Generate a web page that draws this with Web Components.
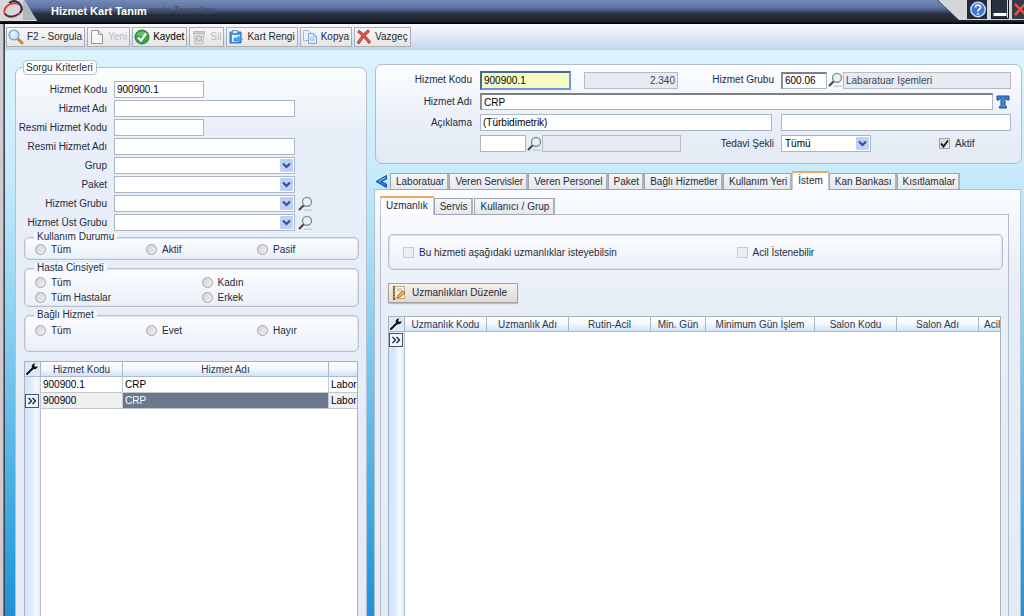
<!DOCTYPE html>
<html lang="tr">
<head>
<meta charset="utf-8">
<title>Hizmet Kart Tanım</title>
<style>
html, body { margin: 0; height: 100%; }
body { font: 10px/12px "Liberation Sans", Arial, sans-serif; color: #1f2a3c; overflow: hidden; }
</style>
</head>
<body>
<app-window></app-window>
<script>
const base = `*{box-sizing:border-box} input,select,button{font:inherit;color:inherit;margin:0;border-radius:0} svg{display:block}`;
const define = (name, render) => customElements.define(name, class extends HTMLElement {
  connectedCallback() {
    if (this.shadowRoot) return;
    const root = this.attachShadow({ mode: 'open' });
    const t = document.createElement('template');
    t.innerHTML = render(this, (n, d = '') => this.getAttribute(n) ?? d);
    root.append(t.content.cloneNode(true));
  }
});

const icons = {
  search: `<svg width="16" height="16" viewBox="0 0 16 16"><path d="M9.500 9.500l4.500 4.500" stroke="#c58a4c" stroke-width="3" stroke-linecap="round"/><circle cx="6" cy="6" r="4.800" fill="#cfeafb" stroke="#7ba9cf" stroke-width="1.600"/><path d="M3.500 5.500a3 3 0 0 1 3-2.300" stroke="#fff" stroke-width="1.400" fill="none"/></svg>`,
  page: `<svg width="16" height="16" viewBox="0 0 16 16"><path d="M2.500 1.500h7l4 4v9h-11z" fill="#fcfcfc" stroke="#777"/><path d="M9.500 1.500v4h4" fill="#ddd" stroke="#777"/></svg>`,
  ok: `<svg width="16" height="16" viewBox="0 0 16 16"><circle cx="8" cy="8" r="7" fill="#3ba246" stroke="#237b30"/><path d="M2.500 6a6 6 0 0 1 11 0q-5 2-11 0z" fill="#7bcd7e" opacity=".7"/><path d="M4 8.500l3 3 5-7" fill="none" stroke="#fff" stroke-width="2.200"/></svg>`,
  trash: `<svg width="16" height="16" viewBox="0 0 16 16"><path d="M3 4h10l-1 11H4z" fill="#ddd" stroke="#aaa"/><path d="M2.500 2.500h11v2h-11z" fill="#c4c4c4" stroke="#aaa"/><circle cx="8" cy="9.500" r="2.500" fill="none" stroke="#aaa" stroke-width="1.500"/></svg>`,
  color: `<svg width="16" height="16" viewBox="0 0 16 16"><path d="M2 3h11v11H2z" fill="#4796dc" stroke="#2f73b8"/><path d="M4.500 1.500h5v3h-5z" fill="#d9ecfb" stroke="#5b97ca"/><path d="M4 6h8v7H4z" fill="#e0f0ff"/><path d="M6 9h4V7l4.500 3.500L10 14v-2H6z" fill="#49a4ee" stroke="#2f7fd0" stroke-width=".6"/></svg>`,
  copy: `<svg width="16" height="16" viewBox="0 0 16 16"><path d="M1.500 1.500h5l3 3v7h-8z" fill="#e9f2fd" stroke="#9eb8df"/><path d="M6.500 4.500h5l3 3v7h-8z" fill="#dceafb" stroke="#86a5d6"/><path d="M11.500 4.500v3h3M8 9h4M8 11h5" fill="none" stroke="#9eb8df"/></svg>`,
  cross: `<svg width="16" height="16" viewBox="0 0 16 16"><path d="M2 2q6 4 12 12M13 1.500Q7 6 2 14.500" fill="none" stroke="#a93127" stroke-width="3"/><path d="M2 2q6 4 12 12M13 1.500Q7 6 2 14.500" fill="none" stroke="#e2574b" stroke-width="1.600"/></svg>`,
  edit: `<svg width="16" height="16" viewBox="0 0 16 16"><path d="M3.500 1.500h10v12h-10z" fill="#fbf7ea" stroke="#b8a98a"/><path d="M2 1h2v14H2z" fill="#8a5228"/><path d="M1 3h4M1 6h4M1 9h4M1 12h4" stroke="#d9b98e"/><path d="M6 4h5M6 6h6" stroke="#aaa"/><path d="M6 13l1-3 5-4 2 2-5 4z" fill="#f4b13f" stroke="#bb7620"/></svg>`,
  lens: `<svg width="16" height="16" viewBox="0 0 16 16"><path d="M7 14.200h8" stroke="#bccac8" stroke-width="1.200"/><path d="M7 9L2 14" stroke="#484848" stroke-width="2.200"/><circle cx="10" cy="5.800" r="4.500" fill="#e5f4f3" stroke="#7b8c8a" stroke-width="1.300"/></svg>`,
  wrench: `<svg width="14" height="14" viewBox="0 0 14 14"><path d="M2 12l5.500-5.500" stroke="#111" stroke-width="2" stroke-linecap="round"/><path d="M10.300 1.500a3 3 0 0 0-3.500 3.800L8.700 7.200A3 3 0 0 0 12.500 4l-1.900 1L9 3.600z" fill="#111"/></svg>`,
  chevron: `<svg width="13" height="13" viewBox="0 0 13 13"><rect width="13" height="13" rx="1" fill="#bfd0f8"/><path d="M3 4.500l3.500 3.500L10 4.500" fill="none" stroke="#35518f" stroke-width="2.200"/></svg>`
};

define('title-bar', () => `<style>${base}
:host{display:flex;align-items:center;height:24px;flex:none;position:relative;background:linear-gradient(#7489b8,#5f75a4 30%,#445273 45%,#262e3d 60%,#1d2430 90%,#000 96%);color:#fff}
.logo{align-self:flex-start}
h1{font-size:11px;line-height:14px;margin:0 0 3px 14px;font-weight:bold}
.ghost{color:#414d68;margin:0 0 3px 2px}
.win{margin-left:auto;align-self:flex-start;display:flex}
</style>
<svg class="logo" width="37" height="21" viewBox="0 0 37 21"><path d="M0 0h24q4 6 13 21H0z" fill="#d8d8dc"/><path d="M23 0q5 8 14 20H23z" fill="#b3b5bc"/><g fill="none"><ellipse cx="13" cy="10" rx="9" ry="6.500" stroke="#d74434" stroke-width="2" transform="rotate(-20 13 10)"/><path d="M9 3q5-4 10 0 5 5 1 10" stroke="#29334a" stroke-width="2"/><path d="M5 14q6 5 13 0" stroke="#29334a" stroke-width="1.500"/></g></svg>
<h1>Hizmet Kart Tanım</h1><span class="ghost">mete Tanımları</span>
<svg class="win" role="img" aria-label="Pencere düğmeleri" width="87" height="20" viewBox="0 0 87 20"><path d="M0 0h87v20H22q-5-2-9-9z" fill="#565d70"/><path d="M2 0h85v20H23z" fill="#d5d6da"/><path d="M2 0l21 20" stroke="#f2f2f2"/><path d="M30 0h20v19H30z" fill="#222c40"/><circle cx="41" cy="9.500" r="7.200" fill="#3f78d0" stroke="#c9def8" stroke-width="1.400"/><path d="M38.500 7.500q0-2.500 2.500-2.500t2.500 2.300q0 1.200-1.300 1.900T41 11.500M41 13v1.800" fill="none" stroke="#fff" stroke-width="1.600"/><path d="M54 0h16v19H54z" fill="#29303f"/><path d="M54.500 0v18.500h17V0" fill="none" stroke="#10141c"/><path d="M56.500 13h13v3h-13z" fill="#fff"/><path d="M75 0h12v19H75z" fill="#353a46"/><path d="M78 4l11 11M89 3L78 15" stroke="#e4503e" stroke-width="2.600"/></svg>`);

define('tool-button', (el, a) => `<style>${base}
:host{display:block;flex:none}
button{display:flex;align-items:center;gap:3px;height:20px;padding:0 2px 0 1px;border:1px solid #a9adb5;background:linear-gradient(#f8f8f6,#e6e5e3);white-space:nowrap;color:${a('tone', '#222b3a')}}
button:disabled{color:#bbbbbf} button:disabled svg{opacity:.75}
:host([wide]) button{gap:5px;padding:0 10px 0 2px;border-color:#a7a39f;background:linear-gradient(#f4f0ec,#ddd9d6);box-shadow:0 1px 1px #b9b9bf}
</style><button type="button" ${el.hasAttribute('disabled') ? 'disabled' : ''}>${icons[a('icon')]}<span><slot></slot></span></button>`);

define('text-field', (el, a) => `<style>${base}
:host{display:flex;align-items:center;gap:var(--label-gap,8px);min-width:0;${a('w') ? 'flex:none' : 'flex:1'}}
label{flex:none;width:${a('lw', 'var(--label-w,auto)')};text-align:right;white-space:nowrap}
input{${a('w') ? `flex:none;width:${a('w')}px` : 'flex:1;width:0;min-width:0'};height:17px;border:1px solid #abb5c8;background:#fff;padding:0 2px;color:#000;outline:0}
input[readonly]{background:#e7ebf1;color:#3c4555;border-color:#b4bac6}
:host([num]) input{text-align:right}
:host([sunk]) input{border-top:2px solid #7f7f82;border-left:2px solid #8e8e91}
:host([focus]) input{height:19px;background:#f6fdc4;border:2px solid #6f97e4;border-top-color:#47688f;border-left-color:#47688f;}
</style>${a('label') ? `<label for="f">${a('label')}</label>` : ''}<input id="f" type="text" value="${a('value')}" ${a('label') ? '' : `aria-label="${a('name')}"`} ${el.hasAttribute('readonly') ? 'readonly' : ''}>`);

define('combo-box', (el, a) => `<style>${base}
:host{display:flex;align-items:center;gap:var(--label-gap,8px);flex:none}
label{flex:none;width:var(--label-w,auto);text-align:right;white-space:nowrap}
span{position:relative;display:block;width:${a('w')}px}
select{appearance:none;width:100%;height:17px;border:1px solid #abb5c8;background:#fff;padding:0 3px;color:#000;display:block;outline:0}
svg{position:absolute;right:2px;top:2px;pointer-events:none}
</style><label for="s">${a('label')}</label><span><select id="s"><option>${a('value')}</option></select>${icons.chevron}</span>`);

define('lookup-button', (el, a) => `<style>${base}
:host{display:block;flex:none}button{display:block;border:0;background:none;padding:0}
</style><button type="button" aria-label="${a('name', 'Ara')}">${icons.lens}</button>`);

define('choice-item', (el, a) => `<style>${base}
:host{display:block}
label{display:flex;align-items:center;gap:5px;white-space:nowrap}
input{appearance:none;flex:none;width:11px;height:11px;border:1px solid #a3a5aa;background:linear-gradient(135deg,#d4d4d6,#f0f0f0)}
input[type=radio]{border-radius:50%}
input:disabled{border-color:#c9cbd0;background:#eceef0}
.box{display:flex;position:relative}
svg{position:absolute;left:1px;top:1px}
</style><label><span class="box"><input type="${a('type', 'radio')}" ${el.hasAttribute('checked') ? 'checked' : ''} ${el.hasAttribute('disabled') ? 'disabled' : ''}>${el.hasAttribute('checked') ? '<svg width="9" height="9" viewBox="0 0 9 9"><path d="M1 4.500l2.500 3L8 1.500" fill="none" stroke="#222" stroke-width="2"/></svg>' : ''}</span><slot></slot></label>`);

define('group-box', (el, a) => `<style>${base}
:host{display:block;flex:none}
fieldset{margin:0;min-width:0;border:1px solid #b9c0d0;border-radius:5px;background:linear-gradient(#fcfdff,#eaf0f8);padding:var(--pad,0);box-shadow:inset 0 0 0 1px #dde3ee}
legend{padding:0 3px;margin-left:9px;line-height:10px;background:#f5f8fc}
div{display:grid;grid-template-columns:repeat(${a('cols', '3')},1fr);row-gap:4px;line-height:11px}
::slotted(*){padding-left:var(--inset,10px)}
</style><fieldset>${a('label') ? `<legend>${a('label')}</legend>` : ''}<div><slot></slot></div></fieldset>`);

define('data-grid', (el, a) => {
  const cols = JSON.parse(a('columns')), rows = JSON.parse(a('rows'));
  const cell = (v, c, r) => `<td class="${r.sel && c === 1 ? 'hot' : r.sel ? 'sel' : ''}">${v}</td>`;
  return `<style>${base}
:host{display:block;flex:1;min-height:0;overflow:hidden;border:1px solid #a9b1c0;border-bottom:0;background:linear-gradient(90deg,#d3e3fb,#d8e7fc 5px,#f4faff 11px,#dfeefb 15px,#b5bdc9 15px,#b5bdc9 16px,#fff 16px)}
table{border-collapse:separate;border-spacing:0;table-layout:fixed;width:${cols.reduce((s, c) => s + c[1], 16)}px}
th{height:15px;padding:0;font-weight:normal;line-height:13px;white-space:nowrap;border-right:1px solid #aeb6c3;border-bottom:1px solid #aeb9cb;background:linear-gradient(#fff,#f2f7fd 50%,#cfe2f8);color:#2b3648}
th:first-child{background:#dce9f9}
td{height:16px;padding:0 2px;line-height:13px;color:#000;border-right:1px solid #c3c8d0;border-bottom:1px solid #c3c8d0;white-space:nowrap}
td:first-child{padding:0;border-bottom:0}
.sel{background:#f0f0f0}.hot{background:#6c788c;color:#fff}
.none{border:0}
.mark{display:block;width:14px;height:14px;border:1px solid #46556d;background:#edf4fd}
</style><table><colgroup><col style="width:16px">${cols.map(c => `<col style="width:${c[1]}px">`).join('')}</colgroup>
<thead><tr><th aria-label="Ayarlar">${icons.wrench}</th>${cols.map(c => `<th scope="col" style="text-align:${c[2] || 'center'};padding-left:${c[2] ? 5 : 0}px">${c[0]}</th>`).join('')}</tr></thead>
<tbody>${rows.map(r => `<tr><td>${r.mark ? '<svg class="mark" viewBox="0 0 12 12"><path d="M2.500 3l3 3-3 3M6.500 3l3 3-3 3" fill="none" stroke="#16233a" stroke-width="1.300"/></svg>' : ''}</td>${r.cells ? r.cells.map((v, c) => cell(v, c, r)).join('') : `<td class="none" colspan="${cols.length}"></td>`}</tr>`).join('')}</tbody></table>`;
});

define('tab-strip', (el, a) => `<style>${base}
:host{display:flex;align-items:flex-end;height:19px;flex:none;position:relative;z-index:1;margin-bottom:-1px}
.tabs{display:flex;align-items:flex-end}
.tab{height:17px;padding:0 4px 0 5px;margin-right:1px;flex:none;border:1px solid #9ca5b1;border-right:2px solid #aeb4bd;background:linear-gradient(#f6f6f5,#e6e8eb);white-space:nowrap;line-height:13px}
:host([back]) .tab{margin-right:0;padding-right:3px}
.tab[aria-selected=true]{height:19px;padding-bottom:3px;border-color:#c3c9d4;border-top:2px solid #efa85a;border-bottom:0;border-right-width:1px;background:#fafcff;margin-right:0}
:host .tab[aria-selected=true]{padding-right:5px}
.back{padding:0;border:0;background:none;margin:0 3px 2px 1px}
</style>${el.hasAttribute('back') ? '<button class="back" type="button" aria-label="Geri"><svg width="12" height="13" viewBox="0 0 12 13"><path d="M11.500 0.500L1 6.500l10.500 6V9L6.500 6.500l5-2.500z" fill="#2f74d8" stroke="#1c4fa4"/><path d="M4 6.200L10.500 2.500" stroke="#8cc4ff"/></svg></button>' : ''}
<div class="tabs" role="tablist">${a('tabs').split('|').map(t => `<button class="tab" type="button" role="tab" aria-selected="${t === a('active')}">${t}</button>`).join('')}</div>`);

define('query-panel', () => `<style>${base}
:host{display:flex;min-height:0;--label-w:91px;--label-gap:7px}
fieldset{flex:1;margin:0;min-width:0;border:1px solid #b4bfd2;border-bottom:0;border-radius:7px 7px 0 0;padding:0;background:linear-gradient(#fdfeff,#e9eff8 60px,#e4ebf5);display:flex;flex-direction:column}
legend{margin-left:7px;padding:0 3px 0 2px;line-height:13px;background:#fff;border:1px solid #b9c2d2;border-radius:4px}
.fields{display:flex;flex-direction:column;gap:2px;padding-top:6px}
.row{display:flex;align-items:center;gap:2px;height:17px}
.groups{display:flex;flex-direction:column;gap:3px;margin:1px 7px 0 8px}
.one{--pad:2px 0 4px}.two{--pad:4px 0 3px}.three{--pad:5px 0 15px}
data-grid{margin:9px 8px 0}
</style><fieldset><legend>Sorgu Kriterleri</legend>
<div class="fields">
<div class="row"><text-field label="Hizmet Kodu" value="900900.1" w="90"></text-field></div>
<div class="row"><text-field label="Hizmet Adı" w="181"></text-field></div>
<div class="row"><text-field label="Resmi Hizmet Kodu" w="90"></text-field></div>
<div class="row"><text-field label="Resmi Hizmet Adı" w="181"></text-field></div>
<div class="row"><combo-box label="Grup" w="181"></combo-box></div>
<div class="row"><combo-box label="Paket" w="181"></combo-box></div>
<div class="row"><combo-box label="Hizmet Grubu" w="181"></combo-box><lookup-button></lookup-button></div>
<div class="row"><combo-box label="Hizmet Üst Grubu" w="181"></combo-box><lookup-button></lookup-button></div>
</div>
<div class="groups">
<group-box class="one" label="Kullanım Durumu"><choice-item>Tüm</choice-item><choice-item>Aktif</choice-item><choice-item>Pasif</choice-item></group-box>
<group-box class="two" label="Hasta Cinsiyeti" cols="2"><choice-item>Tüm</choice-item><choice-item>Kadın</choice-item><choice-item>Tüm Hastalar</choice-item><choice-item>Erkek</choice-item></group-box>
<group-box class="three" label="Bağlı Hizmet"><choice-item>Tüm</choice-item><choice-item>Evet</choice-item><choice-item>Hayır</choice-item></group-box>
</div>
<data-grid columns='[["Hizmet Kodu",82],["Hizmet Adı",206],["",60]]' rows='[{"cells":["900900.1","CRP","Labor"]},{"mark":1,"sel":1,"cells":["900900","CRP","Labor"]}]'></data-grid>
</fieldset>`);

define('service-card', () => `<style>${base}
:host{display:flex;flex-direction:column;gap:4px;flex:none;border:1px solid #b0bccf;border-radius:7px;background:linear-gradient(#fcfdff,#e9eff8 60%,#e3eaf4);padding:6px 10px 11px 0}
.row{display:flex;align-items:center;height:17px}
.first{height:18px}
.push{margin-left:auto;--label-gap:7px}
.code{margin-left:13px}.half{margin-left:9px}
.t{margin:0 1px 0 3px;padding:0;border:0;background:none}
.active{width:140px;padding-left:68px;flex:none}
</style>
<div class="row first"><text-field focus label="Hizmet Kodu" lw="96px" value="900900.1" w="91"></text-field><text-field class="code" readonly num name="Numara" value="2.340" w="94"></text-field>
<text-field class="push" sunk label="Hizmet Grubu" value="600.06" w="46"></text-field><lookup-button></lookup-button><text-field readonly name="Grup adı" value="Labaratuar İşemleri" w="168"></text-field></div>
<div class="row"><text-field sunk label="Hizmet Adı" lw="96px" value="CRP"></text-field><button class="t" type="button" aria-label="Metin"><svg width="14" height="14" viewBox="0 0 14 14"><path d="M1 1h12v4h-2q0-2-2-2v7.500q0 1 1.500 1V13h-7v-1.500q1.500 0 1.500-1V3Q3 3 3 5H1z" fill="#4a86d6" stroke="#20468f"/></svg></button></div>
<div class="row"><text-field label="Açıklama" lw="96px" value="(Türbidimetrik)"></text-field><text-field class="half" name="Açıklama 2" w="230"></text-field></div>
<div class="row"><text-field name="Kod" style="margin-left:104px" w="46"></text-field><lookup-button></lookup-button><text-field readonly name="Ad" w="139"></text-field>
<combo-box class="push" label="Tedavi Şekli" value="Tümü" w="90"></combo-box><div class="active"><choice-item type="checkbox" checked>Aktif</choice-item></div></div>`);

define('detail-tabs', () => `<style>${base}
:host{display:flex;flex-direction:column;flex:1;min-height:0}
.outer{flex:1;min-height:0;display:flex;flex-direction:column;border:1px solid #b3bed1;border-bottom:0;background:linear-gradient(#fafcff,#e8eef7 90px,#e4ebf5);padding:6px 11px 0 5px}
.inner{flex:1;min-height:0;display:flex;flex-direction:column;border:1px solid #b3bbce;border-bottom:0;background:linear-gradient(#f9fbfe,#e8eef8 80px,#e4ebf5);padding:19px 5px 0 7px}
group-box{--pad:12px 0 11px;--inset:14px}
tool-button{margin:13px 0;align-self:flex-start}
data-grid{margin-right:2px}
</style>
<tab-strip back active="İstem" tabs="Laboratuar|Veren Servisler|Veren Personel|Paket|Bağlı Hizmetler|Kullanım Yeri|İstem|Kan Bankası|Kısıtlamalar"></tab-strip>
<div class="outer"><tab-strip active="Uzmanlık" tabs="Uzmanlık|Servis|Kullanıcı / Grup"></tab-strip>
<div class="inner">
<group-box cols="2"><choice-item type="checkbox" disabled>Bu hizmeti aşağıdaki uzmanlıklar isteyebilsin</choice-item><choice-item type="checkbox" disabled style="margin-left:27px">Acil İstenebilir</choice-item></group-box>
<tool-button wide icon="edit">Uzmanlıkları Düzenle</tool-button>
<data-grid columns='[["Uzmanlık Kodu",82],["Uzmanlık Adı",82],["Rutin-Acil",82],["Min. Gün",55],["Minimum Gün İşlem",109],["Salon Kodu",82],["Salon Adı",82],["Acil",60,"left"]]' rows='[{"mark":1}]'></data-grid>
</div></div>`);

define('app-window', () => `<style>${base}
:host{display:flex;flex-direction:column;height:100vh;overflow:hidden}
.frame{flex:1;min-height:0;display:flex;flex-direction:column;border-left:1px solid #3d4651;margin-left:4px;box-shadow:-1px 0 #77777e,-4px 0 #cfcbd1}
nav{display:flex;gap:2px;height:26px;flex:none;padding:3px 1px;background:linear-gradient(#f6f9fe,#dfe8f6 50%,#c4d3ec)}
main{flex:1;min-height:0;display:grid;grid-template-columns:352px minmax(0,1fr);gap:7px;padding:10px 2px 0 10px;background:linear-gradient(#dcf3fd,#c8ebfb 120px,#a9dff6 200px,#7fcaef 300px,#2fa2de 500px,#2190d8)}
.right{display:flex;flex-direction:column;gap:7px;min-height:0;padding-top:4px}
service-card{margin-left:1px}
detail-tabs{margin-right:1px}
</style><title-bar></title-bar>
<div class="frame"><nav aria-label="Araç çubuğu">
<tool-button icon="search">F2 - Sorgula</tool-button><tool-button icon="page" disabled>Yeni</tool-button><tool-button icon="ok" tone="#000">Kaydet</tool-button><tool-button icon="trash" disabled>Sil</tool-button><tool-button icon="color">Kart Rengi</tool-button><tool-button icon="copy">Kopya</tool-button><tool-button icon="cross">Vazgeç</tool-button></nav>
<main><query-panel></query-panel><div class="right"><service-card></service-card><detail-tabs></detail-tabs></div></main></div>`);
</script>
</body>
</html>
